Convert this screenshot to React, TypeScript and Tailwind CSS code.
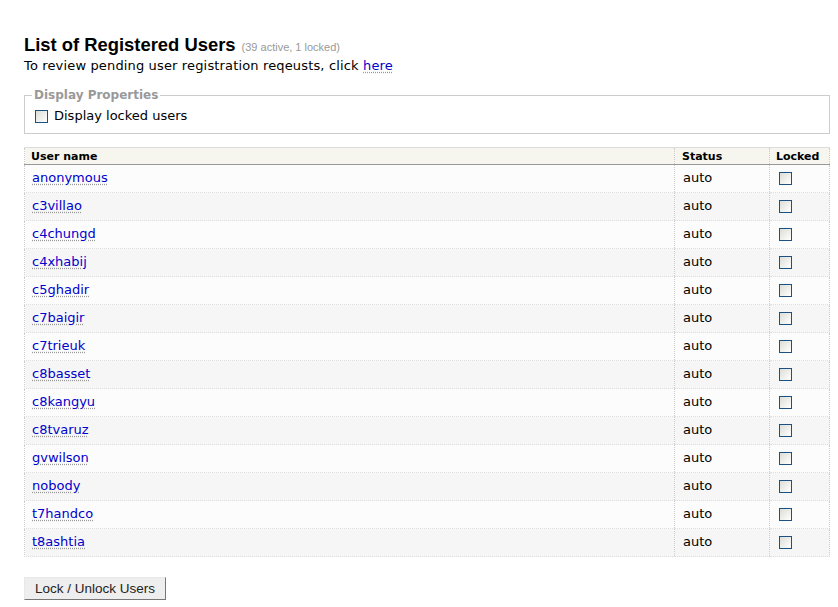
const users = [
  "anonymous",
  "c3villao",
  "c4chungd",
  "c4xhabij",
  "c5ghadir",
  "c7baigir",
  "c7trieuk",
  "c8basset",
  "c8kangyu",
  "c8tvaruz",
  "gvwilson",
  "nobody",
  "t7handco",
  "t8ashtia",
];

function Box() {
  return (
    <span className="inline-block h-[13px] w-[13px] border border-solid border-[#1c5180] bg-gradient-to-br from-[#dcdcd7] to-white align-middle" />
  );
}

export default function App() {
  return (
    <div className="min-h-[607px] bg-white pl-[24px] pr-[8px] pt-[35px] text-black" style={{ fontFamily: '"DejaVu Sans", Verdana, sans-serif' }}>
      <h1 className="flex items-baseline leading-[20px]">
        <span className="text-[18.4px] font-bold" style={{ fontFamily: '"Liberation Sans", Arial, sans-serif' }}>
          List of Registered Users
        </span>
        <span className="ml-[6px] text-[11px] text-[#999]" style={{ fontFamily: '"Liberation Sans", Arial, sans-serif' }}>
          (39 active, 1 locked)
        </span>
      </h1>
      <p className="text-[13px] leading-[18px] tracking-[0.15px]">
        To review pending user registration reqeusts, click{" "}
        <a className="text-[#0000cc] underline decoration-dotted decoration-[#999] underline-offset-2">here</a>
      </p>

      <fieldset className="mt-[13px] border border-[#ccc] pl-[7px] pr-[10px] pb-[9px]">
        <legend className="px-[2px] text-[12px] font-bold leading-[14px] text-[#999]">Display Properties</legend>
        <label className="ml-[3px] flex items-center gap-[6px] pt-[6px] text-[13px] leading-[16px]">
          <Box />
          Display locked users
        </label>
      </fieldset>

      <table className="mt-[13px] w-full border-collapse text-[13px]">
        <thead>
          <tr className="border-t border-b border-t-[#ddd] border-b-[#999] bg-[#f6f6ef]">
            <th className="h-[17px] border-l border-dotted border-[#ccc] px-[6px] py-0 text-left text-[11px] leading-[15px] font-bold">User name</th>
            <th className="w-[95px] border-l border-dotted border-[#ccc] px-[7px] py-0 text-left text-[11px] leading-[15px] font-bold">Status</th>
            <th className="w-[60px] border-x border-dotted border-[#ccc] px-[6px] py-0 text-left text-[11px] leading-[15px] font-bold">Locked</th>
          </tr>
        </thead>
        <tbody>
          {users.map((u, i) => (
            <tr key={u} className={i % 2 === 0 ? "bg-[#fcfcfc]" : "bg-[#f6f6f6]"}>
              <td className="h-[28px] border-b border-b-[#ddd] border-l border-l-[#ccc] border-dotted px-[7px] pb-[1px]">
                <a className="text-[#0000cc] underline decoration-dotted decoration-[#999] underline-offset-2">{u}</a>
              </td>
              <td className="border-b border-b-[#ddd] border-l border-l-[#ccc] border-dotted px-[8px] pb-[1px]">auto</td>
              <td className="border-b border-b-[#ddd] border-x border-x-[#ccc] border-dotted px-[9px] pb-[1px]">
                <Box />
              </td>
            </tr>
          ))}
        </tbody>
      </table>

      <button
        className="mt-[20px] h-[23px] border border-t-[#e8e8e8] border-l-[#e8e8e8] border-b-[#777] border-r-[#777] bg-[#eee] px-[10px] text-[13.5px] leading-[20px] text-[#222]"
        style={{ fontFamily: '"Liberation Sans", Arial, sans-serif' }}
      >
        Lock / Unlock Users
      </button>
    </div>
  );
}
